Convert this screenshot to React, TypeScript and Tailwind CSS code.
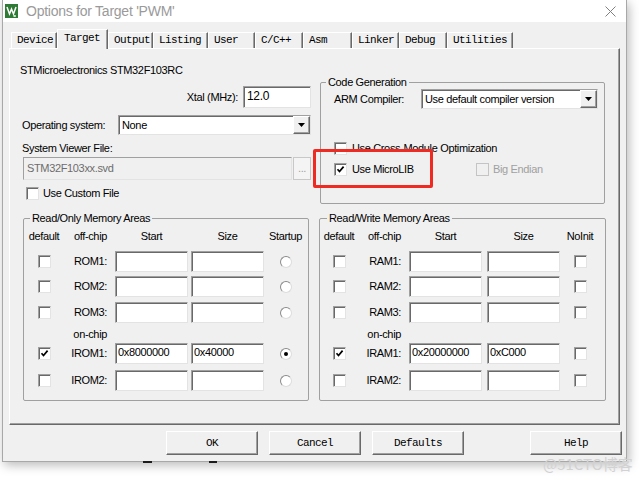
import React from 'react';

const sunken =
  'border border-t-[#a0a0a0] border-l-[#a0a0a0] border-r-[#e3e3e3] border-b-[#e3e3e3] shadow-[inset_1px_1px_0_#696969]';
const raised =
  'bg-[#f0f0f0] border border-t-white border-l-white border-r-[#696969] border-b-[#696969] shadow-[inset_-1px_-1px_0_#a0a0a0]';
const mono = "font-['Liberation_Mono','Courier_New',monospace] text-[11px] tracking-[-0.6px]";

const tabs = [
  { label: 'Device', w: 'w-[46px]' },
  { label: 'Target', w: 'w-[51px]', active: true },
  { label: 'Output', w: 'w-[45px]' },
  { label: 'Listing', w: 'w-[55px]' },
  { label: 'User', w: 'w-[47px]' },
  { label: 'C/C++', w: 'w-[48px]' },
  { label: 'Asm', w: 'w-[49px]' },
  { label: 'Linker', w: 'w-[47px]' },
  { label: 'Debug', w: 'w-[48px]' },
  { label: 'Utilities', w: 'w-[66px]' },
];

const Check = ({ on, disabled }: { on?: boolean; disabled?: boolean }) => (
  <span
    className={`w-[13px] h-[13px] shrink-0 flex items-center justify-center ${
      disabled ? 'bg-[#f0f0f0] border border-[#c4c4c4]' : `bg-white ${sunken}`
    }`}
  >
    {on && (
      <svg width="9" height="9" viewBox="0 0 9 9">
        <path d="M1.5 4.2 L3.5 6.5 L7.6 1.6" stroke="#000" strokeWidth="1.7" fill="none" />
      </svg>
    )}
  </span>
);

const Radio = ({ on }: { on?: boolean }) => (
  <span className="w-[12px] h-[12px] rounded-full bg-white border border-t-[#8a8a8a] border-l-[#8a8a8a] border-r-[#dcdcdc] border-b-[#dcdcdc] flex items-center justify-center">
    {on && <span className="w-[4px] h-[4px] rounded-full bg-black" />}
  </span>
);

const Select = ({ value, w }: { value: string; w: string }) => (
  <div className={`${w} h-[20px] bg-white ${sunken} flex items-stretch`}>
    <span className="flex-1 pl-[3px] leading-[18px]">{value}</span>
    <span className={`w-[17px] ${raised} flex items-center justify-center`}>
      <svg width="7" height="4" viewBox="0 0 7 4">
        <path d="M0 0 H7 L3.5 4 Z" fill="#000" />
      </svg>
    </span>
  </div>
);

const Field = ({ value, w }: { value?: string; w: string }) => (
  <div className={`${w} h-[21px] bg-white ${sunken} pl-[2px] pt-[2px] leading-[13px]`}>{value}</div>
);

type Row = { name: string; start?: string; size?: string; on?: boolean; mt: string };

const roRows: Row[] = [
  { name: 'ROM1:', mt: 'mt-[8px]' },
  { name: 'ROM2:', mt: 'mt-[4px]' },
  { name: 'ROM3:', mt: 'mt-[5px]' },
];
const roChip: Row[] = [
  { name: 'IROM1:', start: '0x8000000', size: '0x40000', on: true, mt: 'mt-0' },
  { name: 'IROM2:', mt: 'mt-[6px]' },
];
const rwRows: Row[] = [
  { name: 'RAM1:', mt: 'mt-[8px]' },
  { name: 'RAM2:', mt: 'mt-[4px]' },
  { name: 'RAM3:', mt: 'mt-[5px]' },
];
const rwChip: Row[] = [
  { name: 'IRAM1:', start: '0x20000000', size: '0xC000', on: true, mt: 'mt-0' },
  { name: 'IRAM2:', mt: 'mt-[6px]' },
];

const cols = {
  ro: { a: 'w-[40px]', b: 'w-[43px]', gap1: 'ml-[8px]', gap2: 'ml-[3px]', last: 'w-[43px]', lastLabel: 'Startup' },
  rw: { a: 'w-[38px]', b: 'w-[43px]', gap1: 'ml-[8px]', gap2: 'ml-[5px]', last: 'w-[40px]', lastLabel: 'NoInit' },
};

const MemArea = ({ title, kind, rows, chip, box }: { title: string; kind: 'ro' | 'rw'; rows: Row[]; chip: Row[]; box: string }) => {
  const c = cols[kind];
  const renderRow = (r: Row) => (
    <div key={r.name} className={`flex items-center h-[21px] ${r.mt}`}>
      <div className={`${c.a} flex justify-center`}>
        <Check on={r.on} />
      </div>
      <div className={`${c.b} text-right`}>{r.name}</div>
      <div className={c.gap1}>
        <Field w="w-[73px]" value={r.start} />
      </div>
      <div className={c.gap2}>
        <Field w="w-[73px]" value={r.size} />
      </div>
      <div className={`${c.last} flex justify-center`}>
        {kind === 'ro' ? <Radio on={r.on} /> : <Check />}
      </div>
    </div>
  );
  return (
    <fieldset className={`${box} h-[189px] border border-[#a0a0a0] rounded-[2px]`}>
      <legend className={`${kind === 'ro' ? 'ml-[6px]' : 'ml-[7px]'} px-[2px] leading-[13px]`}>{title}</legend>
      <div className="flex mt-[5px] h-[13px] leading-[13px]">
        <div className={`${c.a} text-center`}>default</div>
        <div className={`${c.b} text-right`}>off-chip</div>
        <div className={`${c.gap1} w-[73px] text-center`}>Start</div>
        <div className={`${c.gap2} w-[73px] text-center`}>Size</div>
        <div className={`${c.last} text-center`}>{c.lastLabel}</div>
      </div>
      {rows.map(renderRow)}
      <div className="flex h-[20px] pt-[5px] leading-[13px]">
        <div className={c.a} />
        <div className={`${c.b} text-right`}>on-chip</div>
      </div>
      {chip.map(renderRow)}
    </fieldset>
  );
};

const Button = ({ label, ml }: { label: string; ml: string }) => (
  <div className={`${ml} w-[92px] h-[24px] ${raised} ${mono} flex items-center justify-center text-black`}>{label}</div>
);

export default function App() {
  return (
    <div className="relative w-[639px] h-[478px] bg-white overflow-hidden font-['Liberation_Sans',Arial,sans-serif] text-[11px] tracking-[-0.35px] text-black">
      <div className="ml-[2px] w-[625px] h-[462px] flex flex-col bg-[#f0f0f0] border-x border-b border-[#a8a8a8] shadow-[2px_3px_10px_rgba(0,0,0,0.28)]">
        {/* title bar */}
        <div className="h-[22px] bg-white flex items-center shrink-0">
          <svg className="ml-[2px]" width="13" height="14" viewBox="0 0 13 14">
            <rect width="13" height="14" fill="#2f7a34" />
            <path d="M2 3 L4.5 10 L6.5 5 L8.5 10 L11 3" stroke="#fff" strokeWidth="1.5" fill="none" />
            <path d="M8.5 11.5 h2 v1 h-2" stroke="#fff" strokeWidth="0.8" fill="none" />
          </svg>
          <span className="ml-[8px] text-[14px] leading-[20px] tracking-[-0.25px] text-[#9a9a9a]">
            Options for Target 'PWM'
          </span>
          <svg className="ml-auto mr-[10px]" width="11" height="11" viewBox="0 0 11 11">
            <path d="M0.5 0.5 L10.5 10.5 M10.5 0.5 L0.5 10.5" stroke="#808080" strokeWidth="1" />
          </svg>
        </div>

        {/* tabs */}
        <div className="mt-[7px] ml-[8px] h-[19px] flex items-end">
          {tabs.map((t) =>
            t.active ? (
              <div
                key={t.label}
                className={`${t.w} h-[20px] -mb-px relative z-10 bg-[#f0f0f0] border-t border-l border-white border-r border-r-[#696969] shadow-[inset_-1px_0_0_#a0a0a0] pl-[6px] pt-[2px] ${mono} leading-[13px]`}
              >
                {t.label}
              </div>
            ) : (
              <div
                key={t.label}
                className={`${t.w} h-[16px] border-t border-l border-white border-r border-r-[#696969] shadow-[inset_-1px_0_0_#a0a0a0] pl-[5px] ${mono} leading-[14px]`}
              >
                {t.label}
              </div>
            )
          )}
        </div>

        {/* tab page */}
        <div className="ml-[6px] w-[611px] h-[377px] shrink-0 border border-t-white border-l-white border-r-[#696969] border-b-[#696969] shadow-[inset_-1px_-1px_0_#a0a0a0] pl-[10px] pt-[15px]">
          <div className="flex items-start">
            <div className="w-[291px] flex flex-col">
              <div className="h-[13px] leading-[13px]">STMicroelectronics STM32F103RC</div>
              <div className="mt-[9px] flex justify-end items-center h-[22px]">
                <span className="mr-[5px]">Xtal (MHz):</span>
                <div className={`w-[68px] h-[22px] bg-white ${sunken} pl-[3px] pt-[2px] leading-[14px] text-[12px]`}>12.0</div>
              </div>
              <div className="mt-[7px] flex items-center h-[20px]">
                <span className="w-[98px] pl-[2px]">Operating system:</span>
                <Select w="w-[193px]" value="None" />
              </div>
              <div className="mt-[7px] pl-[2px] h-[13px] leading-[13px]">System Viewer File:</div>
              <div className="mt-[2px] pl-[3px] flex h-[23px]">
                <div className={`w-[269px] h-[23px] bg-[#f0f0f0] ${sunken} shadow-none pl-[3px] leading-[20px] text-[#6d6d6d]`}>STM32F103xx.svd</div>
                <div className="ml-[1px] w-[18px] h-[23px] bg-[#f4f4f4] border border-[#c8c8c8] flex items-end justify-center pb-[5px] text-[#a0a0a0] leading-none">...</div>
              </div>
              <div className="mt-[7px] pl-[6px] flex items-center h-[13px]">
                <Check />
                <span className="ml-[4px] leading-[13px]">Use Custom File</span>
              </div>
            </div>

            <fieldset className="ml-[9px] mt-[12px] w-[285px] h-[128px] border border-[#a0a0a0] rounded-[2px]">
              <legend className="ml-[5px] px-[2px] leading-[13px]">Code Generation</legend>
              <div className="flex items-center h-[20px] pl-[13px]">
                <span className="w-[87px]">ARM Compiler:</span>
                <Select w="w-[177px]" value="Use default compiler version" />
              </div>
              <div className="mt-[33px] pl-[13px] flex items-center h-[13px]">
                <Check />
                <span className="ml-[5px]">Use Cross-Module Optimization</span>
              </div>
              <div className="mt-[8px] pl-[13px] flex items-center h-[13px]">
                <div className="w-[142px] flex items-center">
                  <Check on />
                  <span className="ml-[5px]">Use MicroLIB</span>
                </div>
                <Check disabled />
                <span className="ml-[4px] text-[#a0a0a0]">Big Endian</span>
              </div>
            </fieldset>
          </div>

          <div className="mt-[8px] flex">
            <MemArea title="Read/Only Memory Areas" kind="ro" rows={roRows} chip={roChip} box="ml-[3px] w-[286px]" />
            <MemArea title="Read/Write Memory Areas" kind="rw" rows={rwRows} chip={rwChip} box="ml-[10px] w-[287px]" />
          </div>
        </div>

        {/* buttons */}
        <div className="mt-[6px] flex">
          <Button label="OK" ml="ml-[163px]" />
          <Button label="Cancel" ml="ml-[11px]" />
          <Button label="Defaults" ml="ml-[11px]" />
          <Button label="Help" ml="ml-[66px]" />
        </div>
      </div>

      {/* annotation */}
      <div className="absolute left-[313px] top-[149px] w-[120px] h-[39px] border-[3px] border-[#ef2a22] rounded-[2px]" />
      <div className="absolute left-[143px] top-[461px] w-[9px] h-[2px] bg-[#1c1c1c]" />
      <div className="absolute left-[209px] top-[461px] w-[8px] h-[2px] bg-[#1c1c1c]" />
      <div className="absolute left-[543px] top-[453px] text-[15px] tracking-normal text-[#d2d2d2] font-['Noto_Sans_CJK_SC',sans-serif]">@51CTO博客</div>
    </div>
  );
}
